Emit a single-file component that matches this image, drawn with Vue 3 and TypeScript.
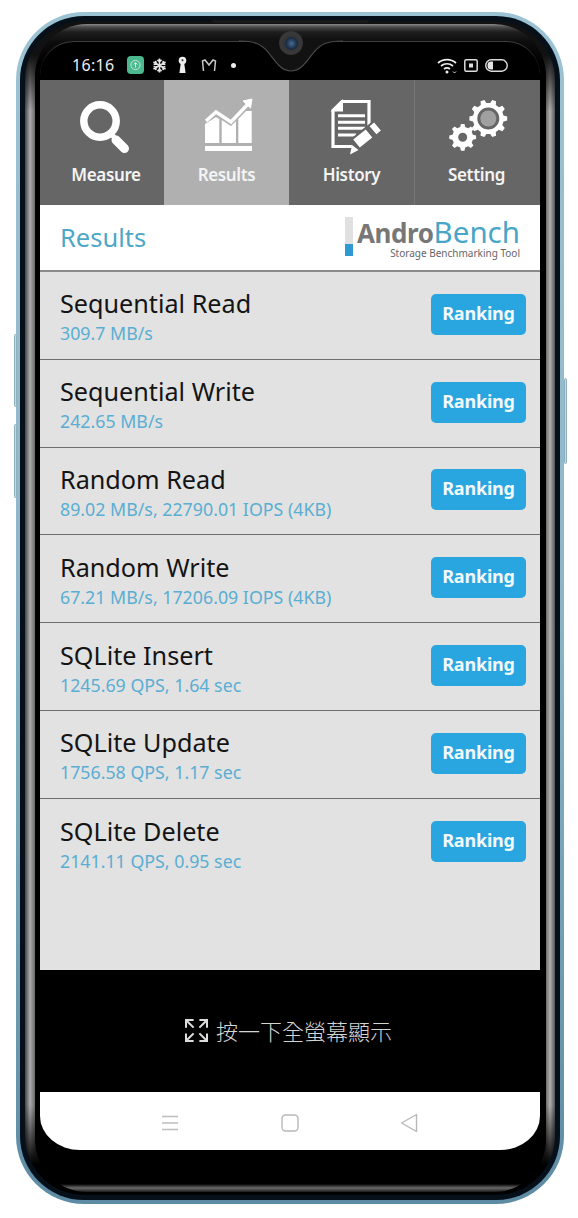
<script setup lang="ts">
// AndroBench results screen inside a phone mockup.

interface ResultRow {
  title: string;
  value: string;
}

const rows: ResultRow[] = [
  { title: "Sequential Read", value: "309.7 MB/s" },
  { title: "Sequential Write", value: "242.65 MB/s" },
  { title: "Random Read", value: "89.02 MB/s, 22790.01 IOPS (4KB)" },
  { title: "Random Write", value: "67.21 MB/s, 17206.09 IOPS (4KB)" },
  { title: "SQLite Insert", value: "1245.69 QPS, 1.64 sec" },
  { title: "SQLite Update", value: "1756.58 QPS, 1.17 sec" },
  { title: "SQLite Delete", value: "2141.11 QPS, 0.95 sec" },
];

// builds a cog outline with a round hole
function gear(cx: number, cy: number, outer: number, root: number, teeth: number, hole: number): string {
  const step = (Math.PI * 2) / teeth;
  const pt = (r: number, a: number) =>
    `${(cx + r * Math.cos(a)).toFixed(2)} ${(cy + r * Math.sin(a)).toFixed(2)}`;
  let d = "";
  for (let i = 0; i < teeth; i++) {
    const a = i * step;
    d += (i === 0 ? "M" : "L") + pt(root, a - step * 0.3);
    d += "L" + pt(outer, a - step * 0.17);
    d += "L" + pt(outer, a + step * 0.17);
    d += "L" + pt(root, a + step * 0.3);
  }
  d += "Z";
  d += `M${cx - hole} ${cy}a${hole} ${hole} 0 1 0 ${hole * 2} 0a${hole} ${hole} 0 1 0 ${-hole * 2} 0Z`;
  return d;
}

const bigGear = gear(73.3, 23.5, 19, 15.5, 10, 11);
const smallGear = gear(47.7, 42.3, 13.5, 10.5, 8, 4.5);
const snowArms = [0, 60, 120];
const expandCorners = [0, 90, 180, 270];
</script>

<template>
  <div class="page">
    <div class="phone">
      <span class="side-btn vol-up"></span>
      <span class="side-btn vol-down"></span>
      <span class="side-btn power"></span>
      <div class="rim">
        <div class="bezel">
          <div class="glass">
            <div class="display">
              <div class="status">
                <div class="status-left">
                  <span class="clock">16:16</span>
                  <svg class="st-green" width="17" height="18" viewBox="0 0 17 18">
                    <rect width="17" height="18" rx="4" fill="#4cb88f" />
                    <circle cx="8.5" cy="9" r="4.6" fill="none" stroke="#bfe8d6" stroke-width="1" />
                    <path d="M8.5 11.5V6.8M6.8 8.4l1.7-1.7 1.7 1.7" fill="none" stroke="#d8f3e7" stroke-width="1" />
                  </svg>
                  <svg class="st-snow" width="15" height="15" viewBox="-8 -8 16 16">
                    <g v-for="a in snowArms" :key="a" :transform="`rotate(${a})`">
                      <path d="M0 -7.5V7.5M-2.2 -6L0 -4L2.2 -6M-2.2 6L0 4L2.2 6" stroke="#e4e4e4" stroke-width="1.7" fill="none" />
                    </g>
                  </svg>
                  <svg class="st-key" width="9" height="18" viewBox="0 0 9 18">
                    <circle cx="4.5" cy="4.5" r="3.8" fill="#eee" />
                    <path d="M2.8 7L1.4 17H7.6L6.2 7Z" fill="#eee" />
                    <circle cx="4.5" cy="4.2" r="1" fill="#333" />
                  </svg>
                  <svg class="st-m" width="16" height="13" viewBox="0 0 16 13">
                    <path d="M2.5 12L1.5 2L4 1L8 6L12 1L14.5 2L13.5 12" fill="none" stroke="#c8c8c8" stroke-width="1.5" />
                  </svg>
                  <span class="st-dot"></span>
                </div>
                <div class="status-right">
                  <svg width="20" height="17" viewBox="0 0 20 17">
                    <path d="M1 6C6 1.5 14 1.5 19 6M4 9C7.5 6 12.5 6 16 9M7 12C8.8 10.6 11.2 10.6 13 12" fill="none" stroke="#eee" stroke-width="1.7" />
                    <circle cx="10" cy="15" r="1.5" fill="#eee" />
                    <path d="M16 14.5l1.5 1.5 1.5-1.5" fill="none" stroke="#ddd" stroke-width="1" />
                  </svg>
                  <svg width="14" height="13" viewBox="0 0 14 13">
                    <rect x="0.8" y="0.8" width="12.4" height="11.4" rx="1.5" fill="none" stroke="#ddd" stroke-width="1.5" />
                    <rect x="5" y="4.5" width="4" height="4" fill="#ddd" />
                  </svg>
                  <svg width="23" height="13" viewBox="0 0 23 13">
                    <rect x="0.8" y="0.8" width="21.4" height="11.4" rx="5.5" fill="none" stroke="#ddd" stroke-width="1.4" />
                    <path d="M6 2.5H8V10.5H6C3.5 10.5 2.5 9 2.5 6.5C2.5 4 3.5 2.5 6 2.5Z" fill="#e6e6e6" />
                  </svg>
                </div>
              </div>

              <div class="tabs">
                <div class="tab">
                  <svg class="tab-icon" viewBox="0 0 124 62" width="124" height="62">
                    <circle cx="60" cy="26" r="16.2" fill="none" stroke="#fff" stroke-width="7.5" />
                    <path d="M70 38L76 44" stroke="#fff" stroke-width="5" />
                    <path d="M76 45L84.5 53.5" stroke="#fff" stroke-width="9" stroke-linecap="round" />
                  </svg>
                  <span class="tab-label shifted">Measure</span>
                </div>
                <div class="tab active">
                  <svg class="tab-icon" viewBox="0 0 124 62" width="124" height="62">
                    <path d="M41 26L51 17L66 27L83 9" fill="none" stroke="#fff" stroke-width="3.4" />
                    <path d="M78 6L87 4L85.5 13Z" fill="#fff" stroke="#fff" />
                    <path d="M40 29L51 22L54.3 24V48H40Z" fill="#fff" />
                    <path d="M56.7 25L66 31L71 26V48H56.7Z" fill="#fff" />
                    <path d="M73.3 24L81 16H86.7V48H73.3Z" fill="#fff" />
                    <rect x="40" y="51" width="47" height="5" fill="#fff" />
                  </svg>
                  <span class="tab-label">Results</span>
                </div>
                <div class="tab">
                  <svg class="tab-icon" viewBox="0 0 124 62" width="124" height="62">
                    <path d="M79 31V6.5H52L43 15.5V51.5H62" fill="none" stroke="#fff" stroke-width="3.2" />
                    <path d="M52 6.5V15.5H43Z" fill="#fff" stroke="#fff" stroke-width="2" />
                    <path d="M48 20.7H75M48 27.3H75M48 33.3H75M48 40H66" stroke="#fff" stroke-width="3" />
                    <path d="M66 49L86 33" stroke="#666" stroke-width="15" />
                    <path d="M66.5 48.5L79 38.5M83 35.3L87.5 31.5" stroke="#fff" stroke-width="10.5" />
                    <path d="M60 59.5L62 50L68.5 55Z" fill="#fff" />
                  </svg>
                  <span class="tab-label">History</span>
                </div>
                <div class="tab split">
                  <svg class="tab-icon" viewBox="0 0 124 62" width="124" height="62">
                    <path :d="bigGear" fill="#fff" fill-rule="evenodd" />
                    <circle cx="73.3" cy="23.5" r="8" fill="#a0a0a0" />
                    <path :d="smallGear" fill="#fff" fill-rule="evenodd" />
                  </svg>
                  <span class="tab-label">Setting</span>
                </div>
              </div>

              <header class="head">
                <span class="head-title">Results</span>
                <div class="logo">
                  <span class="logo-bar"></span>
                  <div class="logo-text">
                    <div class="logo-name"><b>Andro</b><span>Bench</span></div>
                    <div class="logo-sub">Storage Benchmarking Tool</div>
                  </div>
                </div>
              </header>

              <div class="list">
                <div v-for="row in rows" :key="row.title" class="row">
                  <div class="row-text">
                    <div class="row-title">{{ row.title }}</div>
                    <div class="row-value">{{ row.value }}</div>
                  </div>
                  <div class="rank">Ranking</div>
                </div>
              </div>

              <div class="fullscreen">
                <svg width="23" height="23" viewBox="-12 -12 24 24">
                  <g v-for="r in expandCorners" :key="r" :transform="`rotate(${r})`">
                    <path d="M-11 -3V-11H-3" fill="none" stroke="#dcdcdc" stroke-width="2.2" />
                    <path d="M-10 -10L-3 -3" stroke="#dcdcdc" stroke-width="2.2" />
                  </g>
                </svg>
                <span>按一下全螢幕顯示</span>
              </div>

              <nav class="nav">
                <svg width="18" height="18" viewBox="0 0 18 18">
                  <path d="M1 2.5H17M1 9H17M1 15.5H17" stroke="#bdbdbd" stroke-width="1.4" />
                </svg>
                <svg width="18" height="20" viewBox="0 0 18 20">
                  <rect x="1" y="2" width="16" height="16" rx="3.5" fill="none" stroke="#b8b8b8" stroke-width="1.4" />
                </svg>
                <svg width="18" height="20" viewBox="0 0 18 20">
                  <path d="M1.5 10L16.5 1.5V18.5Z" fill="none" stroke="#b8b8b8" stroke-width="1.4" stroke-linejoin="round" />
                </svg>
              </nav>
            </div>

            <span class="speaker"></span>
            <svg class="notch" viewBox="0 0 104 33" width="104" height="33">
              <path d="M0 0H104V1C88 1 82 4 75 12C67 22 62 31 52 31C42 31 37 22 29 12C22 4 16 1 0 1Z" fill="#121212" />
              <path d="M0 1C16 1 22 4 29 12C37 22 42 31 52 31C62 31 67 22 75 12C82 4 88 1 104 1" fill="none" stroke="#4a4a4a" stroke-width="1.2" />
            </svg>
            <span class="camera"><span class="lens"></span></span>
          </div>
        </div>
      </div>
    </div>
  </div>
</template>

<style scoped>
.page {
  width: 578px;
  height: 1218px;
  box-sizing: border-box;
  padding: 12px 0 0 16px;
  background: #fff;
  overflow: hidden;
  font-family: "Noto Sans", "Noto Sans CJK TC", sans-serif;
}
.phone {
  position: relative;
  width: 548px;
  height: 1192px;
  box-sizing: border-box;
  padding: 4px;
  border-radius: 68px;
  background: linear-gradient(180deg, #9cc3d3 0%, #8cb6c8 50%, #5d8ba4 100%);
}
.side-btn {
  position: absolute;
  width: 3px;
  box-sizing: border-box;
  border: 1px solid #8fb0be;
  background: #c4d8e0;
  border-radius: 2px;
}
.vol-up { left: -2px; top: 322px; height: 73px; }
.vol-down { left: -2px; top: 412px; height: 74px; }
.power { right: -3px; top: 366px; height: 86px; }
.rim {
  height: 100%;
  box-sizing: border-box;
  padding: 5px;
  border-radius: 64px;
  background: #06101a;
}
.bezel {
  height: 100%;
  box-sizing: border-box;
  padding: 3px 9px 3px 10px;
  border-radius: 59px;
  background:
    linear-gradient(180deg, #111 0, #111 34px, rgba(0, 0, 0, 0) 90px, rgba(0, 0, 0, 0) calc(100% - 90px), #000 calc(100% - 30px), #000 100%),
    linear-gradient(90deg, #444 0, #ababab 5px, #6a6a6a 10px, #6a6a6a calc(100% - 9px), #b0b0b0 calc(100% - 5px), #555 100%);
}
.glass {
  position: relative;
  height: 100%;
  box-sizing: border-box;
  padding: 17px 6px 0 5px;
  border-radius: 52px;
  background: linear-gradient(180deg, #8a8a8a 0, #4a4a4a 3px, #1e1e1e 8px, #0e0e0e 17px, #000 40px, #000 calc(100% - 8px), #6a6a6a calc(100% - 4px), #1a1a1a 100%);
}
.speaker {
  position: absolute;
  left: 177px;
  top: -4px;
  width: 157px;
  height: 3px;
  border-radius: 0 0 3px 3px;
  background: #1a1a1a;
}
.notch {
  position: absolute;
  left: 204px;
  top: 16px;
}
.camera {
  position: absolute;
  left: 244px;
  top: 7px;
  width: 24px;
  height: 24px;
  border-radius: 50%;
  background: radial-gradient(circle, #2a2a2a 0, #3a3a3a 60%, #1a1a1a 100%);
  display: flex;
  align-items: center;
  justify-content: center;
}
.lens {
  width: 13px;
  height: 13px;
  border-radius: 50%;
  background: radial-gradient(circle, #4a6a90 0, #1a2c47 60%, #16243a 100%);
}
.display {
  position: relative;
  width: 500px;
  height: 1109px;
  box-sizing: border-box;
  display: flex;
  flex-direction: column;
  overflow: hidden;
  border-top: 1px solid #3e3e3e;
  border-radius: 34px 34px 40px 40px / 34px 34px 34px 34px;
  background: #000;
}
.status {
  height: 38px;
  flex: none;
  box-sizing: border-box;
  padding: 8px 32px 0 32px;
  display: flex;
  align-items: center;
  justify-content: space-between;
  color: #eee;
}
.status-left,
.status-right {
  display: flex;
  align-items: center;
}
.status-right { gap: 7px; }
.clock {
  font-size: 16px;
  width: 55px;
  letter-spacing: 0.3px;
  color: #eee;
}
.st-snow { margin-left: 8px; }
.st-key { margin-left: 11px; }
.st-m { margin-left: 14px; }
.st-dot {
  width: 5px;
  height: 5px;
  margin-left: 14px;
  border-radius: 50%;
  background: #eee;
}
.tabs {
  height: 125px;
  flex: none;
  display: flex;
  background: #666;
}
.tab {
  width: 125px;
  box-sizing: border-box;
  display: flex;
  flex-direction: column;
  align-items: center;
  padding-top: 15px;
}
.tab:first-child { width: 124px; }
.tab.active { background: #b0b0b0; }
.tab.split { box-shadow: inset 1px 0 0 #777; }
.tab-icon { display: block; flex: none; }
.tab-label {
  margin-top: 5px;
  font-size: 17px;
  line-height: 26px;
  font-weight: 600;
  letter-spacing: -0.35px;
  color: #f4f4f4;
}
.tab-label.shifted { margin-left: 8px; }
.head {
  height: 67px;
  flex: none;
  box-sizing: border-box;
  display: flex;
  align-items: center;
  justify-content: space-between;
  padding: 0 20px;
  background: #fff;
  border-bottom: 2px solid #8a8a8a;
}
.head-title {
  font-size: 25.5px;
  color: #4ea7c7;
  margin-bottom: 2px;
}
.logo {
  display: flex;
  gap: 4px;
  margin-bottom: 1px;
}
.logo-bar {
  width: 8px;
  height: 39px;
  background: linear-gradient(180deg, #e0e0e0 0, #e0e0e0 27px, #2f9ad2 27px, #2f9ad2 100%);
}
.logo-text { text-align: right; }
.logo-name {
  font-size: 29.5px;
  line-height: 29px;
  color: #47a6c6;
}
.logo-name b {
  font-size: 26px;
  font-weight: 700;
  color: #777;
  letter-spacing: -0.4px;
}
.logo-sub {
  font-size: 10px;
  line-height: 10px;
  color: #666;
}
.list {
  flex: 1;
  min-height: 0;
  background: #e2e2e2;
}
.row {
  height: 87.8px;
  box-sizing: border-box;
  display: flex;
  align-items: center;
  justify-content: space-between;
  padding: 0 14px 0 20px;
  border-bottom: 1px solid #6e6e6e;
}
.row:last-child { border-bottom: 0; }
.row-text { margin-top: 2px; }
.row-title {
  font-size: 25.2px;
  line-height: 32px;
  color: #141414;
}
.row-value {
  margin-top: 2px;
  font-size: 17.8px;
  line-height: 24px;
  color: #5aaed3;
}
.rank {
  width: 95px;
  height: 41px;
  margin-bottom: 2px;
  border-radius: 5px;
  background: #29a6e0;
  color: #f2f8fb;
  font-size: 18px;
  font-weight: 700;
  line-height: 38px;
  letter-spacing: -0.2px;
  text-align: center;
}
.fullscreen {
  height: 122px;
  flex: none;
  box-sizing: border-box;
  padding: 0 3px 2px 0;
  display: flex;
  align-items: center;
  justify-content: center;
  gap: 8px;
  background: #000;
  color: #d4d4d4;
  font-family: "Noto Sans CJK TC", sans-serif;
  font-size: 22px;
  font-weight: 300;
}
.nav {
  height: 58px;
  flex: none;
  box-sizing: border-box;
  display: flex;
  align-items: center;
  justify-content: space-between;
  padding: 6px 122px 2px 121px;
  background: #fff;
}
</style>
